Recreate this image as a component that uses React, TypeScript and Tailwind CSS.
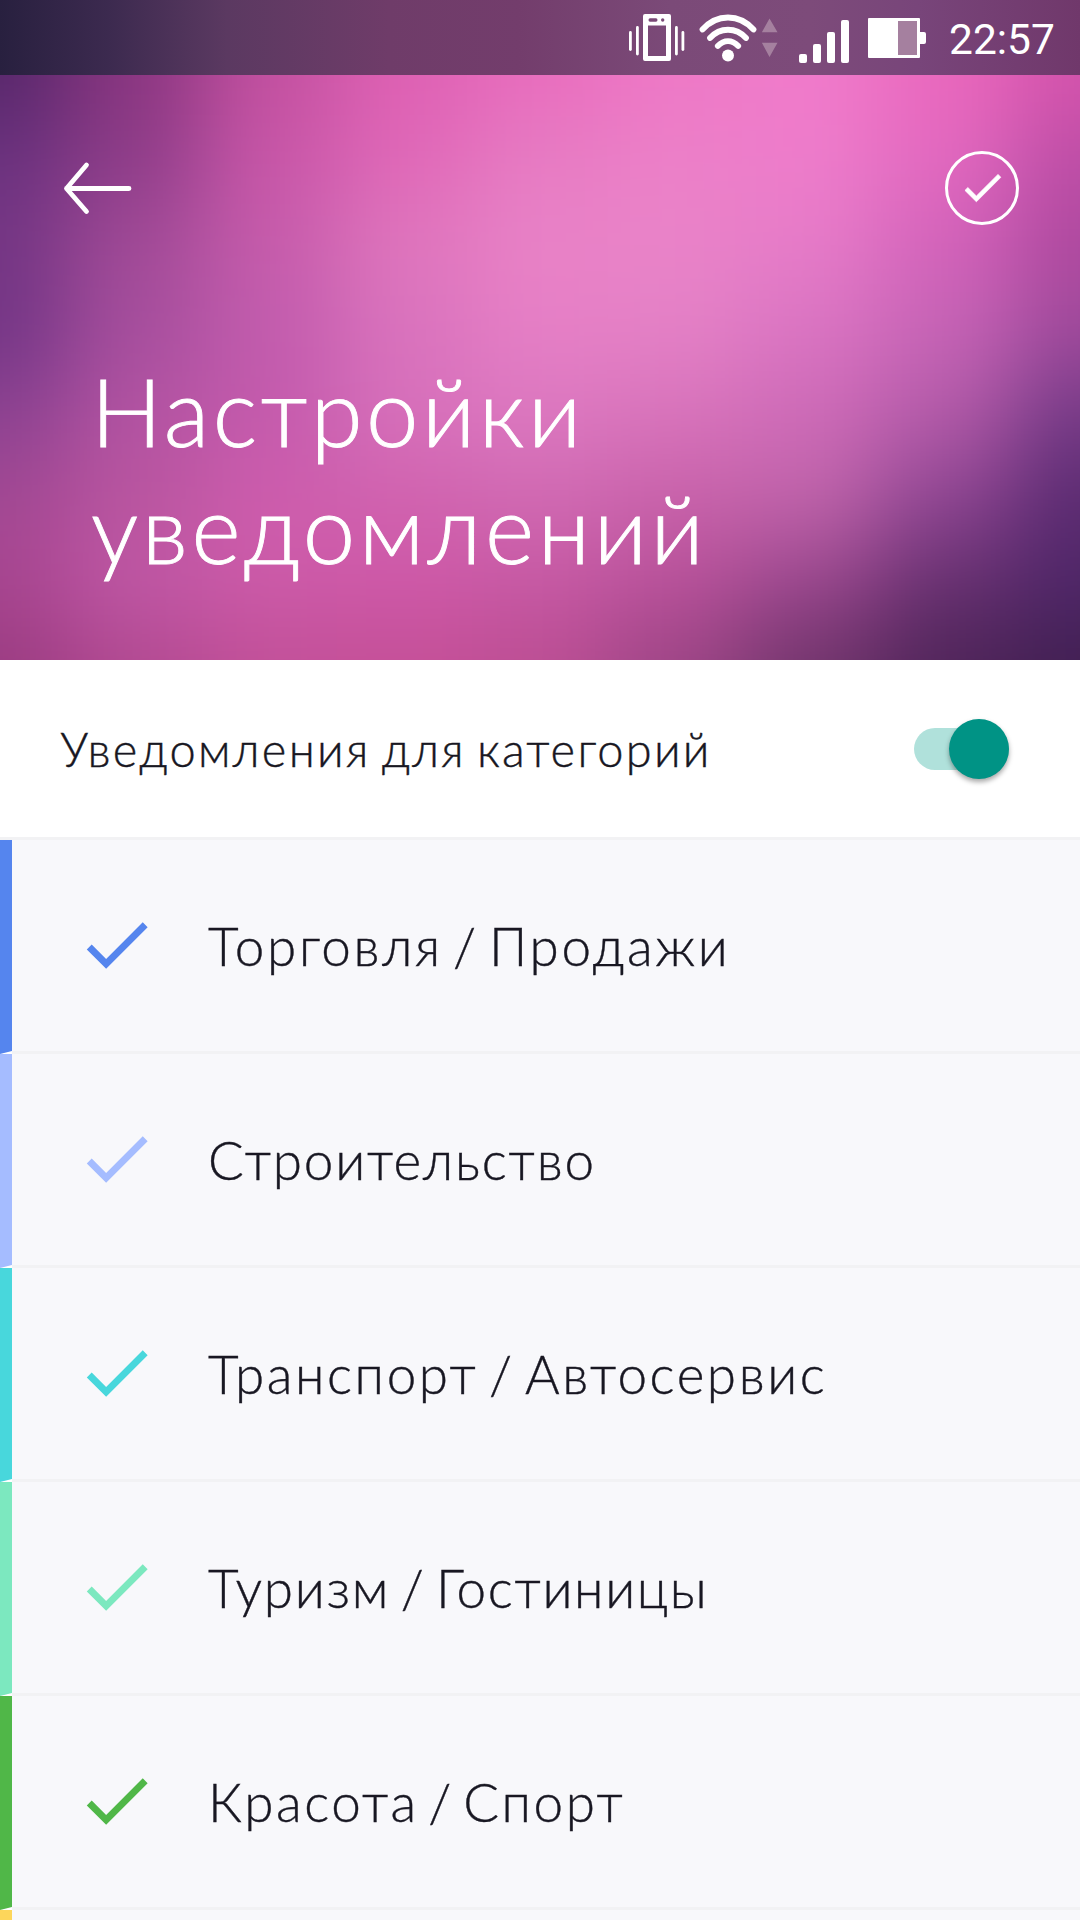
import React from 'react';

const BACKDROP: string[][] = [
  ['#56276a', '#8a3580', '#c2509f', '#de60b3', '#e86cbd', '#ee78c6', '#f07bcb', '#ea68bd', '#d553ac'],
  ['#6b327f', '#8e3d89', '#c856a8', '#e068b8', '#e77cc3', '#ec80c8', '#ee7ccb', '#e269c0', '#bc4da6'],
  ['#753684', '#a24a97', '#c65cab', '#df76bd', '#e982c7', '#e983c8', '#e67bc8', '#d362ba', '#ae489e'],
  ['#723585', '#a54e9d', '#c25cae', '#d972bd', '#e67fc6', '#e481c6', '#da74c2', '#c664b6', '#a04a9c'],
  ['#8c4291', '#b353a2', '#c45aac', '#d770bb', '#dc78c0', '#d873bb', '#cd6ab7', '#b35aa8', '#743a86'],
  ['#a34893', '#b9559f', '#ce5dad', '#d062ae', '#d069b2', '#c862aa', '#c064aa', '#8e4592', '#5a2a70'],
  ['#a84590', '#c057a5', '#cc5aa8', '#cf58a8', '#c658a3', '#b85099', '#98458c', '#66306f', '#4e2668'],
  ['#993b80', '#b0488f', '#c14f97', '#c44f96', '#bb4d92', '#9b4484', '#6f346a', '#4e2458', '#401f50'],
];

const CATEGORIES = [
  { name: 'Торговля / Продажи', color: '#5585ee', spacing: 'tracking-[2.7px] [word-spacing:-7px]' },
  { name: 'Строительство', color: '#a5bcff', spacing: 'tracking-[1.8px]' },
  { name: 'Транспорт / Автосервис', color: '#48d7dc', spacing: 'tracking-[2.6px] [word-spacing:-6.5px]' },
  { name: 'Туризм / Гостиницы', color: '#7ce8bf', spacing: 'tracking-[1.65px] [word-spacing:-5.4px]' },
  { name: 'Красота / Спорт', color: '#50b748', spacing: 'tracking-[2.6px] [word-spacing:-7.5px]' },
];

function Backdrop() {
  return (
    <div className="absolute inset-0 overflow-hidden">
      <div className="absolute -left-[200px] -top-[168px] grid w-[1480px] grid-cols-[267px_repeat(7,135px)_268px] grid-rows-[285px_repeat(6,85px)_285px] blur-[44px]">
        {BACKDROP.flat().map((color, i) => (
          <div key={i} style={{ backgroundColor: color }} />
        ))}
      </div>
    </div>
  );
}

function StatusBar() {
  return (
    <div className="relative h-[75px] bg-[linear-gradient(90deg,#28203f_0%,#3c2a4f_10%,#5b3961_21%,#6f3c69_36%,#733d6c_48%,#7b4a78_62%,#7d4b7a_75%,#78457a_85%,#70386b_100%)]">
      <div className="flex h-full items-start pl-[628px] text-white">
        <svg className="mt-[13px] h-[50px] w-[58px]" viewBox="0 0 58 50" fill="currentColor">
          <path fillRule="evenodd" d="M17 1h24q2 0 2 2v43q0 2-2 2H17q-2 0-2-2V3q0-2 2-2zM20 12.500v30.500h18V12.500zM22 5.300q-1.500 0-1.500 1.700t1.500 1.700h6q1.500 0 1.500-1.700T28 5.300zM34.700 5.300q-1.700 0-1.700 1.700t1.700 1.700 1.700-1.700-1.700-1.700z" />
          <rect x="1" y="18" width="2.800" height="20" rx="1.400" />
          <rect x="8" y="13" width="2.800" height="29.500" rx="1.400" />
          <rect x="47" y="13" width="2.800" height="29.500" rx="1.400" />
          <rect x="53.500" y="18" width="2.800" height="20" rx="1.400" />
        </svg>
        <svg className="ml-[13px] mt-[13px] h-[50px] w-[59px]" viewBox="0 0 59 50" fill="none" stroke="currentColor" strokeLinecap="round">
          <path d="M3.500 16.500C18 .5 40 .5 54.500 16.500" strokeWidth="5.800" />
          <path d="M11 25C21 14 37 14 47 25" strokeWidth="5.800" />
          <path d="M18.800 33C25 26.500 33 26.500 39.200 33" strokeWidth="5.800" />
          <circle cx="29" cy="42.500" r="6" fill="currentColor" stroke="none" />
        </svg>
        <svg className="ml-[4px] mt-[18px] h-[40px] w-[16px]" viewBox="0 0 16 40" fill="#a5809f">
          <path d="M7.500 .5L15.500 14.300H-.2zM-.2 24.700h15.700L7.500 39z" />
        </svg>
        <svg className="ml-[20px] mt-[19px] h-[45px] w-[52px]" viewBox="0 0 52 45" fill="currentColor">
          <rect x="1" y="35" width="8" height="9" rx="2" />
          <rect x="15" y="25" width="8" height="19" rx="2" />
          <rect x="29" y="13" width="8" height="31" rx="2" />
          <rect x="43" y="1" width="8" height="43" rx="2" />
        </svg>
        <svg className="ml-[18px] mt-[17px] h-[42px] w-[59px]" viewBox="0 0 59 42">
          <rect x="29" y="3" width="22" height="36" fill="#a5809f" />
          <path fillRule="evenodd" d="M1 1h50q1 0 1 1v13h4q2 0 2 2v8q0 2-2 2h-4v13q0 1-1 1H1q-1 0-1-1V2q0-1 1-1zM30 4v34h19V4z" fill="#fff" />
        </svg>
        <span className="ml-[22px] mt-[15px] font-['Roboto',sans-serif] text-[42.500px] font-normal leading-[50px]">22:57</span>
      </div>
    </div>
  );
}

function Check({ className }: { className: string }) {
  return (
    <svg className={className} viewBox="0 0 24 24" fill="currentColor">
      <path d="M9 16.170L4.830 12l-1.420 1.410L9 19 21 7l-1.410-1.410z" />
    </svg>
  );
}

export default function App() {
  return (
    <div className="flex h-[1920px] w-[1080px] flex-col overflow-hidden bg-[#f8f8fb] font-['Lato',sans-serif] font-light text-[#181722]">
      <header className="relative h-[660px] shrink-0 text-white">
        <Backdrop />
        <StatusBar />
        <div className="relative flex items-start justify-between pl-[61px] pr-[61px] pt-[76px]">
          <svg className="mt-[9px] h-[56px] w-[72px]" viewBox="0 0 72 56" fill="none" stroke="currentColor" strokeWidth="4.800" strokeLinecap="round" strokeLinejoin="round">
            <path d="M25.500 5L5.500 28.500 25.500 51.500M5.500 28.500H68" />
          </svg>
          <div className="flex size-[74px] items-center justify-center rounded-full border-[3px] border-white">
            <Check className="mb-[2px] h-[49px] w-[49px] stroke-white stroke-[0.35]" />
          </div>
        </div>
        <h1 className="relative pl-[91px] pt-[127px] text-[94px] leading-[117px] [-webkit-text-stroke:0.9px_white]">
          <span className="block tracking-[3.5px]">Настройки</span>
          <span className="block tracking-[3.7px]">уведомлений</span>
        </h1>
      </header>

      <section className="flex h-[180px] shrink-0 items-center justify-between border-b-[3px] border-[#f2f2f4] bg-white pl-[60px] pr-[71px]">
        <span className="text-[47px] leading-[60px] tracking-[2.3px] [-webkit-text-stroke:0.4px_#181722] [word-spacing:-4px]">Уведомления для категорий</span>
        <div className="flex h-[42px] w-[95px] items-center justify-end rounded-full bg-[#b0e1db]">
          <div className="size-[60px] shrink-0 rounded-full bg-[#009385] shadow-[0_3px_5px_rgba(0,0,0,0.35)]" />
        </div>
      </section>

      <ul>
        {CATEGORIES.map((c) => (
          <li key={c.name} className="flex h-[214px]">
            <div className="h-full w-[12px] bg-white">
              <div
                className="h-full w-full [clip-path:polygon(0_0,100%_0,100%_211px,0_214px)]"
                style={{ backgroundColor: c.color }}
              />
            </div>
            <div className="flex flex-1 items-start border-b-[3px] border-[#f2f2f4]">
              <div className="ml-[63px] mt-[63px] h-[83px] w-[83px]" style={{ color: c.color }}>
                <Check className="h-full w-full" />
              </div>
              <span className={`ml-[50px] mt-[73px] whitespace-nowrap text-[53px] leading-[66px] [-webkit-text-stroke:0.4px_#181722] ${c.spacing}`}>{c.name}</span>
            </div>
          </li>
        ))}
      </ul>
      <div className="h-[10px] w-[12px] bg-[#fdd65b]" />
    </div>
  );
}
